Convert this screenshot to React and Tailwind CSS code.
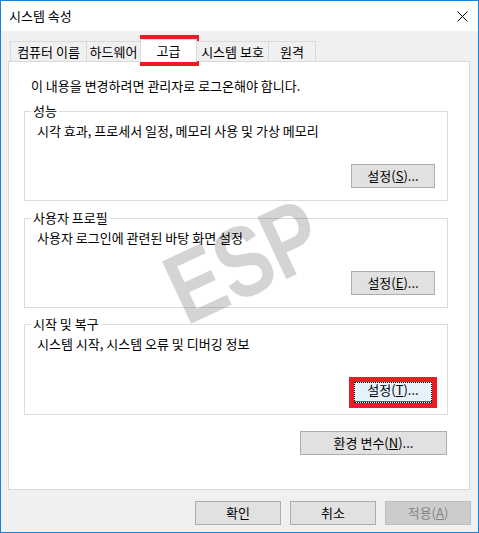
import React from "react";

function Btn({ children, className = "" }) {
  return (
    <div
      className={
        "h-[24px] bg-[#e1e1e1] border border-[#adadad] flex items-center justify-center leading-[16px] " +
        className
      }
    >
      {children}
    </div>
  );
}

function Group({ label, desc, mnem, className = "", focus = false }) {
  return (
    <div
      className={
        "relative w-[424px] border border-[#dcdcdc] flex flex-col pt-[11px] pl-[12px] " +
        className
      }
    >
      <span className="absolute left-[6px] top-[-9px] bg-white px-[2px] leading-[16px]">
        {label}
      </span>
      <p className="leading-[16px]">{desc}</p>
      <div className="mt-auto self-end mr-[12px] mb-[12px] relative">
        {focus ? (
          <div className="w-[84px] h-[24px] bg-[#e5f1fb] border border-[#0078d7] flex items-center justify-center leading-[16px]">
            설정(<u>{mnem}</u>)...
          </div>
        ) : (
          <Btn className="w-[84px]">
            설정(<u>{mnem}</u>)...
          </Btn>
        )}
      </div>
    </div>
  );
}

function Tab({ children, className = "", selected = false }) {
  return (
    <div
      className={
        (selected ? "h-[23px] bg-white -mb-px " : "h-[20px] bg-[#f0f0f0] ") +
        "border-t border-l border-r border-[#d9d9d9] flex items-center justify-center leading-[16px] " +
        className
      }
    >
      {children}
    </div>
  );
}

export default function App() {
  return (
    <div className="w-[479px] h-[533px] border border-[#1883d7] bg-[#f0f0f0] relative flex flex-col font-['Noto_Sans_CJK_KR','Liberation_Sans',sans-serif] text-[13px] text-black overflow-hidden">
      {/* title bar */}
      <div className="h-[30px] bg-white flex items-center justify-between pl-[8px] pr-[10px] shrink-0">
        <span className="leading-[16px]">시스템 속성</span>
        <svg width="11" height="11" viewBox="0 0 11 11">
          <path
            d="M0.5 0.5 L10.5 10.5 M10.5 0.5 L0.5 10.5"
            stroke="#000"
            strokeWidth="1"
            fill="none"
          />
        </svg>
      </div>

      <div className="pl-[7px] pr-[8px] flex flex-col">
        {/* tabs */}
        <div className="flex items-end h-[30px] pl-[2px] relative z-10">
          <Tab className="w-[77px]">컴퓨터 이름</Tab>
          <Tab className="w-[55px] -ml-px">하드웨어</Tab>
          <Tab className="w-[57px] -ml-px" selected>
            고급
          </Tab>
          <Tab className="w-[73px] -ml-px">시스템 보호</Tab>
          <Tab className="w-[48px] -ml-px">원격</Tab>
        </div>

        {/* panel */}
        <div className="h-[429px] bg-white border border-[#d9d9d9] flex flex-col pl-[15px]">
          <p className="mt-[16px] ml-[7px] leading-[16px]">
            이 내용을 변경하려면 관리자로 로그온해야 합니다.
          </p>
          <Group
            className="mt-[17px] h-[90px]"
            label="성능"
            desc="시각 효과, 프로세서 일정, 메모리 사용 및 가상 메모리"
            mnem="S"
          />
          <Group
            className="mt-[17px] h-[90px]"
            label="사용자 프로필"
            desc="사용자 로그인에 관련된 바탕 화면 설정"
            mnem="E"
          />
          <Group
            className="mt-[16px] h-[91px]"
            label="시작 및 복구"
            desc="시스템 시작, 시스템 오류 및 디버깅 정보"
            mnem="T"
            focus
          />
          <div className="w-[424px] flex justify-end mt-[16px]">
            <Btn className="w-[147px] mr-px">
              환경 변수(<u>N</u>)...
            </Btn>
          </div>
        </div>
      </div>

      {/* bottom buttons */}
      <div className="flex justify-end pr-[7px] mt-[11px] gap-[9px]">
        <Btn className="w-[86px]">확인</Btn>
        <Btn className="w-[86px]">취소</Btn>
        <div className="w-[86px] h-[24px] bg-[#cccccc] border border-[#bfbfbf] flex items-center justify-center leading-[16px] text-[#838383]">
          적용(<u>A</u>)
        </div>
      </div>

      {/* watermark */}
      <div className="absolute left-[242px] top-[260px] pointer-events-none">
        <span className="block -translate-x-1/2 -translate-y-1/2 -rotate-[25deg] scale-x-[0.8] font-['Liberation_Sans',sans-serif] font-bold text-[100px] leading-none text-black/[0.17] tracking-[-1px]">
          ESP
        </span>
      </div>

      {/* red highlight boxes */}
      <div className="absolute left-[139px] top-[34px] w-[59px] h-[31px] border-[4px] border-[#ed1c24] pointer-events-none" />
      <div className="absolute left-[348px] top-[376px] w-[88px] h-[31px] border-[5px] border-[#ed1c24] pointer-events-none">
        <div className="w-full h-full border border-dotted border-black" />
      </div>
    </div>
  );
}
